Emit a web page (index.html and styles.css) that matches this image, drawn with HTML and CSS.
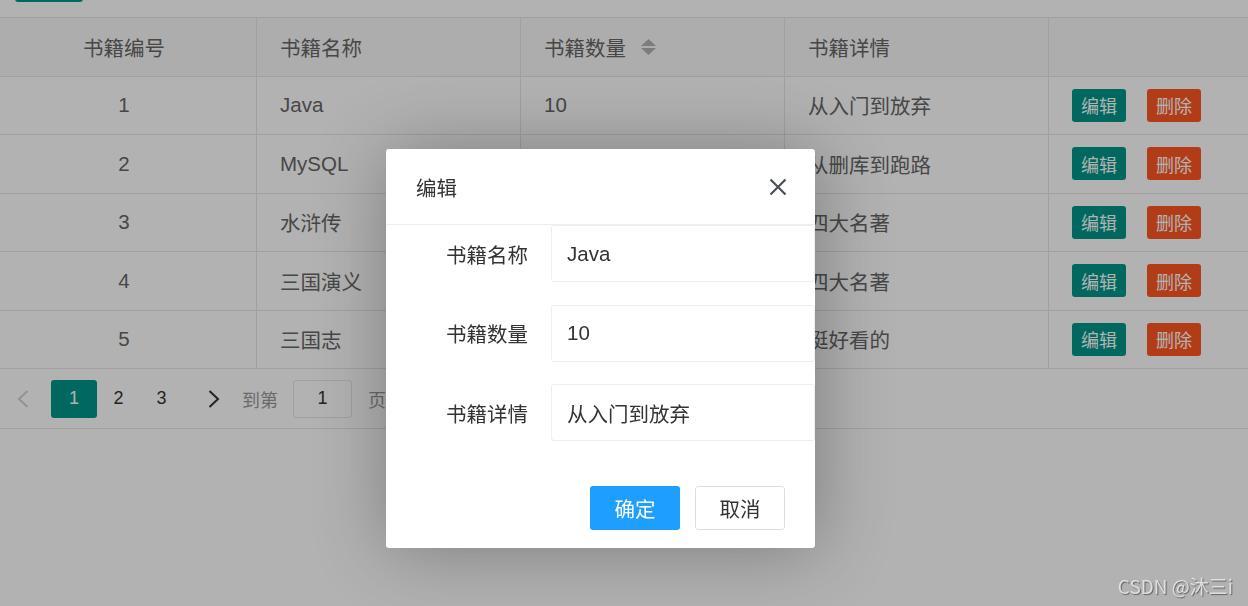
FILE: index.html
```html
<!DOCTYPE html>
<html lang="zh-CN">
<head>
<meta charset="utf-8">
<title>书籍管理</title>
<link rel="stylesheet" href="styles.css">
</head>
<body>
<div class="page">
  <div class="toolbar"><span class="tool-btn"></span></div>
  <div class="table">
    <div class="row head">
      <div class="cell center">书籍编号</div>
      <div class="cell">书籍名称</div>
      <div class="cell">书籍数量
        <svg class="sort" width="15" height="16" viewBox="0 0 15 16"><path d="M7.5 0 L15 7 L0 7 Z" fill="#b2b2b2"/><path d="M0 9 L15 9 L7.5 16 Z" fill="#b2b2b2"/></svg>
      </div>
      <div class="cell">书籍详情</div>
      <div class="cell"></div>
    </div>
    <div class="row">
      <div class="cell center">1</div><div class="cell">Java</div><div class="cell">10</div><div class="cell">从入门到放弃</div>
      <div class="cell"><span class="btn edit">编辑</span><span class="btn del">删除</span></div>
    </div>
    <div class="row">
      <div class="cell center">2</div><div class="cell">MySQL</div><div class="cell">20</div><div class="cell">从删库到跑路</div>
      <div class="cell"><span class="btn edit">编辑</span><span class="btn del">删除</span></div>
    </div>
    <div class="row">
      <div class="cell center">3</div><div class="cell">水浒传</div><div class="cell">30</div><div class="cell">四大名著</div>
      <div class="cell"><span class="btn edit">编辑</span><span class="btn del">删除</span></div>
    </div>
    <div class="row">
      <div class="cell center">4</div><div class="cell">三国演义</div><div class="cell">40</div><div class="cell">四大名著</div>
      <div class="cell"><span class="btn edit">编辑</span><span class="btn del">删除</span></div>
    </div>
    <div class="row">
      <div class="cell center">5</div><div class="cell">三国志</div><div class="cell">50</div><div class="cell">挺好看的</div>
      <div class="cell"><span class="btn edit">编辑</span><span class="btn del">删除</span></div>
    </div>
  </div>
  <div class="pager">
    <span class="pg prev"><svg width="12" height="18" viewBox="0 0 12 18"><path d="M10.5 1 L2 9 L10.5 17" fill="none" stroke="#d2d2d2" stroke-width="2"/></svg></span>
    <span class="pg current">1</span>
    <span class="pg">2</span>
    <span class="pg">3</span>
    <span class="pg next"><svg width="12" height="18" viewBox="0 0 12 18"><path d="M1.5 1 L10 9 L1.5 17" fill="none" stroke="#333" stroke-width="2"/></svg></span>
    <span class="skip">到第</span>
    <span class="skip-input">1</span>
    <span class="skip">页</span>
    <span class="go">确定</span>
    <span class="skip">共 15 条</span>
  </div>
</div>

<div class="shade"></div>

<div class="dialog">
  <div class="dlg-title">
    <span>编辑</span>
    <svg class="close" width="18" height="18" viewBox="0 0 18 18"><path d="M1.5 1.5 L16.5 16.5 M16.5 1.5 L1.5 16.5" stroke="#4b4f58" stroke-width="2.2" fill="none"/></svg>
  </div>
  <div class="dlg-body">
    <div class="form-row"><label class="form-label">书籍名称</label><div class="input">Java</div></div>
    <div class="form-row"><label class="form-label">书籍数量</label><div class="input">10</div></div>
    <div class="form-row"><label class="form-label">书籍详情</label><div class="input">从入门到放弃</div></div>
    <div class="form-actions">
      <span class="dbtn primary">确定</span>
      <span class="dbtn plain">取消</span>
    </div>
  </div>
</div>

<div class="watermark">CSDN @沐三i</div>
</body>
</html>
```

FILE: styles.css
```css
* { box-sizing: border-box; }

html, body {
  margin: 0;
  padding: 0;
  width: 1248px;
  height: 606px;
  overflow: hidden;
  background: #fff;
  font-family: "Liberation Sans", "Noto Sans CJK SC", sans-serif;
}

.page {
  width: 1248px;
  height: 606px;
  background: #fff;
  color: #666;
}

.toolbar {
  display: flow-root;
  height: 2px;
  padding-left: 15px;
  overflow: visible;
}

.tool-btn {
  display: block;
  width: 68px;
  height: 57px;
  margin-top: -55px;
  background: #009688;
  border-radius: 3px;
}

.table {
  margin-top: 15px;
  border-top: 1px solid #e6e6e6;
  width: 1248px;
}

.row {
  display: grid;
  grid-template-columns: 256px 264px 264px 264px 200px;
  height: 58.5px;
  border-bottom: 1px solid #e6e6e6;
  font-size: 20.5px;
}

.row.head {
  background: #f8f8f8;
}

.cell {
  display: flex;
  align-items: center;
  padding-left: 23px;
  border-left: 1px solid #e6e6e6;
  white-space: nowrap;
  overflow: hidden;
}

.cell:first-child { border-left: none; }

.cell.center {
  justify-content: center;
  padding-left: 0;
  padding-right: 8px;
}

.sort { margin-left: 15px; }

.btn {
  display: inline-flex;
  align-items: center;
  justify-content: center;
  width: 54px;
  height: 33px;
  border-radius: 3px;
  color: #fff;
  font-size: 18px;
  margin-right: 21px;
}

.btn.edit { background: #009688; }
.btn.del { background: #ff5722; }

.pager {
  display: flex;
  align-items: center;
  height: 60px;
  border-bottom: 1px solid #e6e6e6;
  font-size: 18px;
  color: #333;
}

.pg {
  display: inline-flex;
  align-items: center;
  justify-content: center;
  width: 43px;
  height: 38px;
}

.pg.prev { width: 46px; margin-right: 5px; }
.pg.current {
  width: 46px;
  background: #009688;
  color: #fff;
  border-radius: 3px;
}
.pg.next { width: 44px; margin-left: 9px; }

.skip {
  color: #999;
  margin-left: 6px;
}

.skip-input {
  display: inline-flex;
  align-items: center;
  justify-content: center;
  width: 59px;
  height: 38px;
  border: 1px solid #e6e6e6;
  border-radius: 3px;
  margin: 0 10px 0 15px;
  color: #333;
}

.go {
  display: inline-flex;
  align-items: center;
  justify-content: center;
  width: 60px;
  height: 38px;
  margin-left: 10px;
  border: 1px solid #e6e6e6;
  border-radius: 3px;
}

.shade {
  position: fixed;
  inset: 0;
  background: rgba(0, 0, 0, 0.3);
  z-index: 10;
}

.dialog {
  position: absolute;
  left: 386px;
  top: 149px;
  width: 429px;
  height: 399px;
  background: #fff;
  border-radius: 3px;
  overflow: hidden;
  box-shadow: 2px 2px 75px rgba(0, 0, 0, 0.3);
  z-index: 20;
  color: #333;
}

.dlg-title {
  display: flex;
  align-items: center;
  justify-content: space-between;
  height: 76px;
  padding: 0 28px 0 30px;
  border-bottom: 1px solid #eee;
  font-size: 20.5px;
}

.dlg-body {
  display: flex;
  flex-direction: column;
  gap: 22.5px;
}

.form-row {
  display: flex;
  align-items: center;
}

.form-label {
  width: 142px;
  text-align: right;
  margin-right: 23px;
  font-size: 20.5px;
  color: #333;
}

.input {
  display: flex;
  align-items: center;
  flex: none;
  width: 264px;
  height: 57px;
  padding-left: 15px;
  border: 1px solid #eee;
  border-radius: 3px;
  font-size: 20.5px;
  color: #333;
  white-space: nowrap;
}

.form-actions {
  display: flex;
  justify-content: flex-end;
  gap: 15px;
  padding-right: 30px;
  margin-top: 22px;
}

.dbtn {
  display: inline-flex;
  align-items: center;
  justify-content: center;
  width: 90px;
  height: 44px;
  border-radius: 3px;
  font-size: 20.5px;
}

.dbtn.primary {
  background: #1e9fff;
  color: #fff;
}

.dbtn.plain {
  background: #fff;
  color: #333;
  border: 1px solid #dedede;
}

.watermark {
  position: absolute;
  right: 15px;
  bottom: 7px;
  z-index: 30;
  font-family: "Noto Sans CJK SC", sans-serif;
  font-size: 19px;
  color: rgba(235, 235, 235, 0.85);
  text-shadow: 1px 1px 1px rgba(0, 0, 0, 0.45);
}
```
